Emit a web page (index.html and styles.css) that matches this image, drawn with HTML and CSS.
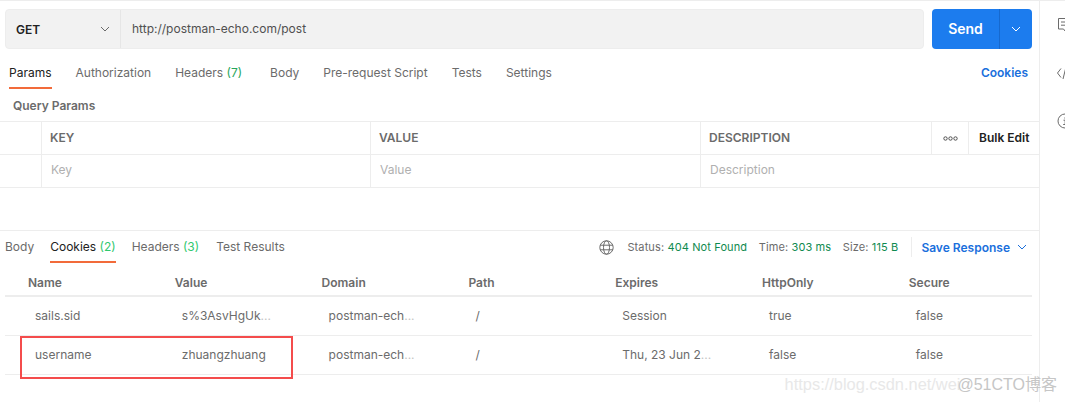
FILE: index.html
```html
<!DOCTYPE html>
<html lang="en">
<head>
  <meta charset="UTF-8">
  <meta name="viewport" content="width=device-width, initial-scale=1.0">
  <title>Postman - Cookies</title>
  <link rel="stylesheet" href="styles.css">
</head>
<body>
  <div class="app">
    <div class="main">
      <section class="request">
        <div class="url-row">
          <div class="url-box">
            <div class="method">
              <span>GET</span>
              <svg class="chevron" width="10" height="6" viewBox="0 0 10 6"><path d="M1 1l4 4 4-4"/></svg>
            </div>
            <div class="url">http://postman-echo.com/post</div>
          </div>
          <div class="send">
            <span class="send-label">Send</span>
            <span class="send-more">
              <svg class="chevron" width="10" height="6" viewBox="0 0 10 6"><path d="M1 1l4 4 4-4"/></svg>
            </span>
          </div>
        </div>

        <div class="req-tabs">
          <span class="tab active">Params</span>
          <span class="tab">Authorization</span>
          <span class="tab counted">Headers <em>(7)</em></span>
          <span class="tab">Body</span>
          <span class="tab">Pre-request Script</span>
          <span class="tab">Tests</span>
          <span class="tab">Settings</span>
          <span class="link cookies-link">Cookies</span>
        </div>

        <div class="query-title">Query Params</div>

        <div class="params">
          <div class="cell"></div>
          <div class="cell head">KEY</div>
          <div class="cell head">VALUE</div>
          <div class="cell head">DESCRIPTION</div>
          <div class="cell dots">
            <svg width="15" height="5" viewBox="0 0 15 5"><circle cx="2.5" cy="2.5" r="1.7"/><circle cx="7.5" cy="2.5" r="1.7"/><circle cx="12.5" cy="2.5" r="1.7"/></svg>
          </div>
          <div class="cell bulk">Bulk Edit</div>
          <div class="cell"></div>
          <div class="cell hint">Key</div>
          <div class="cell hint">Value</div>
          <div class="cell hint wide">Description</div>
        </div>
      </section>

      <section class="response">
        <div class="res-bar">
          <span class="tab plain">Body</span>
          <span class="tab active">Cookies <em class="light">(2)</em></span>
          <span class="tab plain">Headers <em class="light">(3)</em></span>
          <span class="tab plain last">Test Results</span>
          <div class="res-meta">
            <svg class="globe" width="15" height="15" viewBox="0 0 15 15"><circle cx="7.5" cy="7.5" r="6.7"/><ellipse cx="7.5" cy="7.5" rx="3" ry="6.7"/><path d="M1.2 5.2h12.6M1.2 9.8h12.6"/></svg>
            <span class="stat">Status: <b>404 Not Found</b></span>
            <span class="stat">Time: <b>303 ms</b></span>
            <span class="stat">Size: <b>115 B</b></span>
            <span class="link save">Save Response</span>
            <svg class="chevron blue" width="10" height="6" viewBox="0 0 10 6"><path d="M1 1l4 4 4-4"/></svg>
          </div>
        </div>

        <div class="cookies">
          <div class="c-row c-head">
            <span>Name</span><span>Value</span><span>Domain</span><span>Path</span><span>Expires</span><span>HttpOnly</span><span>Secure</span>
          </div>
          <div class="c-row">
            <span>sails.sid</span><span>s%3AsvHgUk<i>...</i></span><span>postman-ech<i>...</i></span><span>/</span><span>Session</span><span>true</span><span>false</span>
          </div>
          <div class="c-row">
            <span>username</span><span>zhuangzhuang</span><span>postman-ech<i>...</i></span><span>/</span><span>Thu, 23 Jun 2<i>...</i></span><span>false</span><span>false</span>
          </div>
        </div>
      </section>
    </div>

    <aside class="side">
      <svg width="16" height="16" viewBox="0 0 16 16"><path d="M1.5 1.5h13v10.500h-5l-1.500 2-1.500-2h-5z"/><path d="M4 5h8M4 8.200h8"/></svg>
      <svg width="16" height="16" viewBox="0 0 16 16"><path d="M4 3.500L.5 8 4 12.500M9 2L6 14"/></svg>
      <svg width="16" height="16" viewBox="0 0 16 16"><circle cx="8" cy="8" r="7"/><path d="M6.500 7.200H8.200V11.500M6.200 11.500h4M7.800 4.500v1"/></svg>
    </aside>
  </div>

  <div class="highlight"></div>
  <div class="watermark"><span class="wm-csdn">https://blog.csdn.net/wei</span><span class="wm-cto">@51CTO博客</span></div>
</body>
</html>
```

FILE: styles.css
```css
* {
  box-sizing: border-box;
}
body {
  margin: 0;
  background-color: #fff;
  color: #6b6b6b;
  font-family: Inter, "Noto Sans CJK SC", sans-serif;
  font-size: 12px;
  overflow: hidden;
}
.app {
  display: flex;
  height: 402px;
  border-top: 1px solid #ededed;
}
.main {
  width: 1040px;
  border-right: 1px solid #ededed;
}
.side {
  display: flex;
  flex-direction: column;
  gap: 32px;
  flex: 1;
  padding: 16px 0 0 17px;
  overflow: hidden;
}
.side svg {
  flex: none;
  fill: none;
  stroke: #6b6b6b;
  stroke-width: 1;
}
.chevron {
  fill: none;
  stroke: #6b6b6b;
  stroke-width: 1;
}

/* request */
.request {
  height: 229px;
}
.url-row {
  display: flex;
  gap: 8px;
  padding: 8px 7px 0 5px;
}
.url-box {
  display: flex;
  flex: 1;
  height: 40px;
  background-color: #f2f2f2;
  border: 1px solid #ededed;
  border-radius: 4px;
}
.method {
  display: flex;
  align-items: center;
  justify-content: space-between;
  width: 115px;
  padding: 0 10px;
  border-right: 1px solid #e6e6e6;
  color: #212121;
  font-weight: 600;
}
.url {
  padding: 0 11px;
  line-height: 37px;
  color: #505050;
}
.send {
  display: flex;
  width: 100px;
  height: 40px;
  background-color: #1c7cee;
  border-radius: 4px;
  color: #fff;
}
.send-label {
  flex: 1;
  text-align: center;
  line-height: 40px;
  font-size: 14px;
  font-weight: 600;
}
.send-more {
  display: flex;
  align-items: center;
  justify-content: center;
  width: 33px;
  border-left: 1px solid #1669cf;
}
.send-more .chevron {
  stroke: #fff;
}
.req-tabs {
  display: flex;
  gap: 24px;
  height: 40px;
  padding: 0 11px 0 9px;
}
.tab {
  display: block;
  height: 100%;
  line-height: 47px;
  white-space: nowrap;
}
.tab.counted {
  margin-right: 4px;
}
.tab em {
  font-style: normal;
  color: #26a65b;
}
.tab em.light {
  color: #2fc86e;
}
.tab.active {
  color: #212121;
  border-bottom: 2px solid #f26b3a;
}
.link {
  color: #1a6fdc;
  font-weight: 600;
}
.cookies-link {
  margin-left: auto;
  line-height: 47px;
}
.query-title {
  padding-left: 13px;
  height: 32px;
  line-height: 33px;
  font-weight: 600;
}
.params {
  display: grid;
  grid-template-columns: 42px 329px 330px 231px 37px 70px;
  grid-auto-rows: 33px;
  border-top: 1px solid #ededed;
}
.cell {
  display: flex;
  align-items: center;
  padding: 0 8px 2px;
  border-right: 1px solid #ededed;
  border-bottom: 1px solid #ededed;
}
.cell:nth-child(6) {
  border-right: none;
}
.head {
  font-weight: 600;
}
.dots {
  justify-content: center;
  padding: 0;
}
.dots svg {
  fill: none;
  stroke: #505050;
  stroke-width: 1;
}
.bulk {
  color: #212121;
  font-weight: 600;
  padding: 0 0 2px 10px;
}
.hint {
  color: #b0b0b0;
  padding-left: 9px;
  padding-bottom: 3px;
}
.wide {
  grid-column: span 3;
  border-right: none;
}

/* response */
.response {
  border-top: 1px solid #ededed;
}
.res-bar {
  display: flex;
  gap: 16px;
  height: 32px;
  padding: 0 12px 0 5px;
}
.res-bar .tab {
  line-height: 32px;
}
.res-bar .tab.last {
  margin-left: 1px;
}
.res-meta {
  display: flex;
  align-items: center;
  margin-left: auto;
  font-size: 11px;
  letter-spacing: 0.12px;
}
.globe {
  fill: none;
  stroke: #6b6b6b;
  stroke-width: 1;
  margin-right: 13px;
}
.stat {
  margin-right: 11.500px;
  white-space: nowrap;
}
.stat:nth-of-type(3) {
  margin-right: 0;
  padding-right: 13px;
  border-right: 1px solid #ededed;
  line-height: 20px;
}
.stat b {
  color: #0f8a4f;
  font-weight: 400;
}
.save {
  margin-left: 9px;
  font-size: 12px;
  letter-spacing: 0;
}
.chevron.blue {
  margin-left: 7px;
  stroke: #1a6fdc;
}
.cookies {
  padding: 0 7px 0 5px;
}
.c-row {
  display: grid;
  grid-template-columns: repeat(7, 146.8px);
  height: 39px;
  align-items: center;
  border-bottom: 1px solid #ededed;
  padding-bottom: 1px;
}
.c-row span {
  padding-left: 30px;
  white-space: nowrap;
}
.c-row span + span {
  padding-left: 30px;
}
.c-row i {
  font-style: normal;
  color: #c4c4c4;
}
.c-head {
  height: 34px;
  border-bottom: 2px solid #ededed;
  font-weight: 600;
  padding-top: 7px;
  padding-bottom: 0;
}
.c-head span,
.c-head span + span {
  padding-left: 23px;
}

/* annotation on top of the screenshot */
.highlight {
  position: absolute;
  left: 20px;
  top: 336px;
  width: 273px;
  height: 43px;
  border: 2px solid #f44c4c;
}
.watermark {
  position: absolute;
  right: 8px;
  top: 371px;
  white-space: nowrap;
  font-family: "Liberation Sans", "Noto Sans CJK SC", sans-serif;
  font-size: 16px;
}
.wm-csdn {
  color: #e8e8e8;
  font-size: 16.400px;
}
.wm-cto {
  color: #c6c6c6;
  margin-left: -3px;
}
```
